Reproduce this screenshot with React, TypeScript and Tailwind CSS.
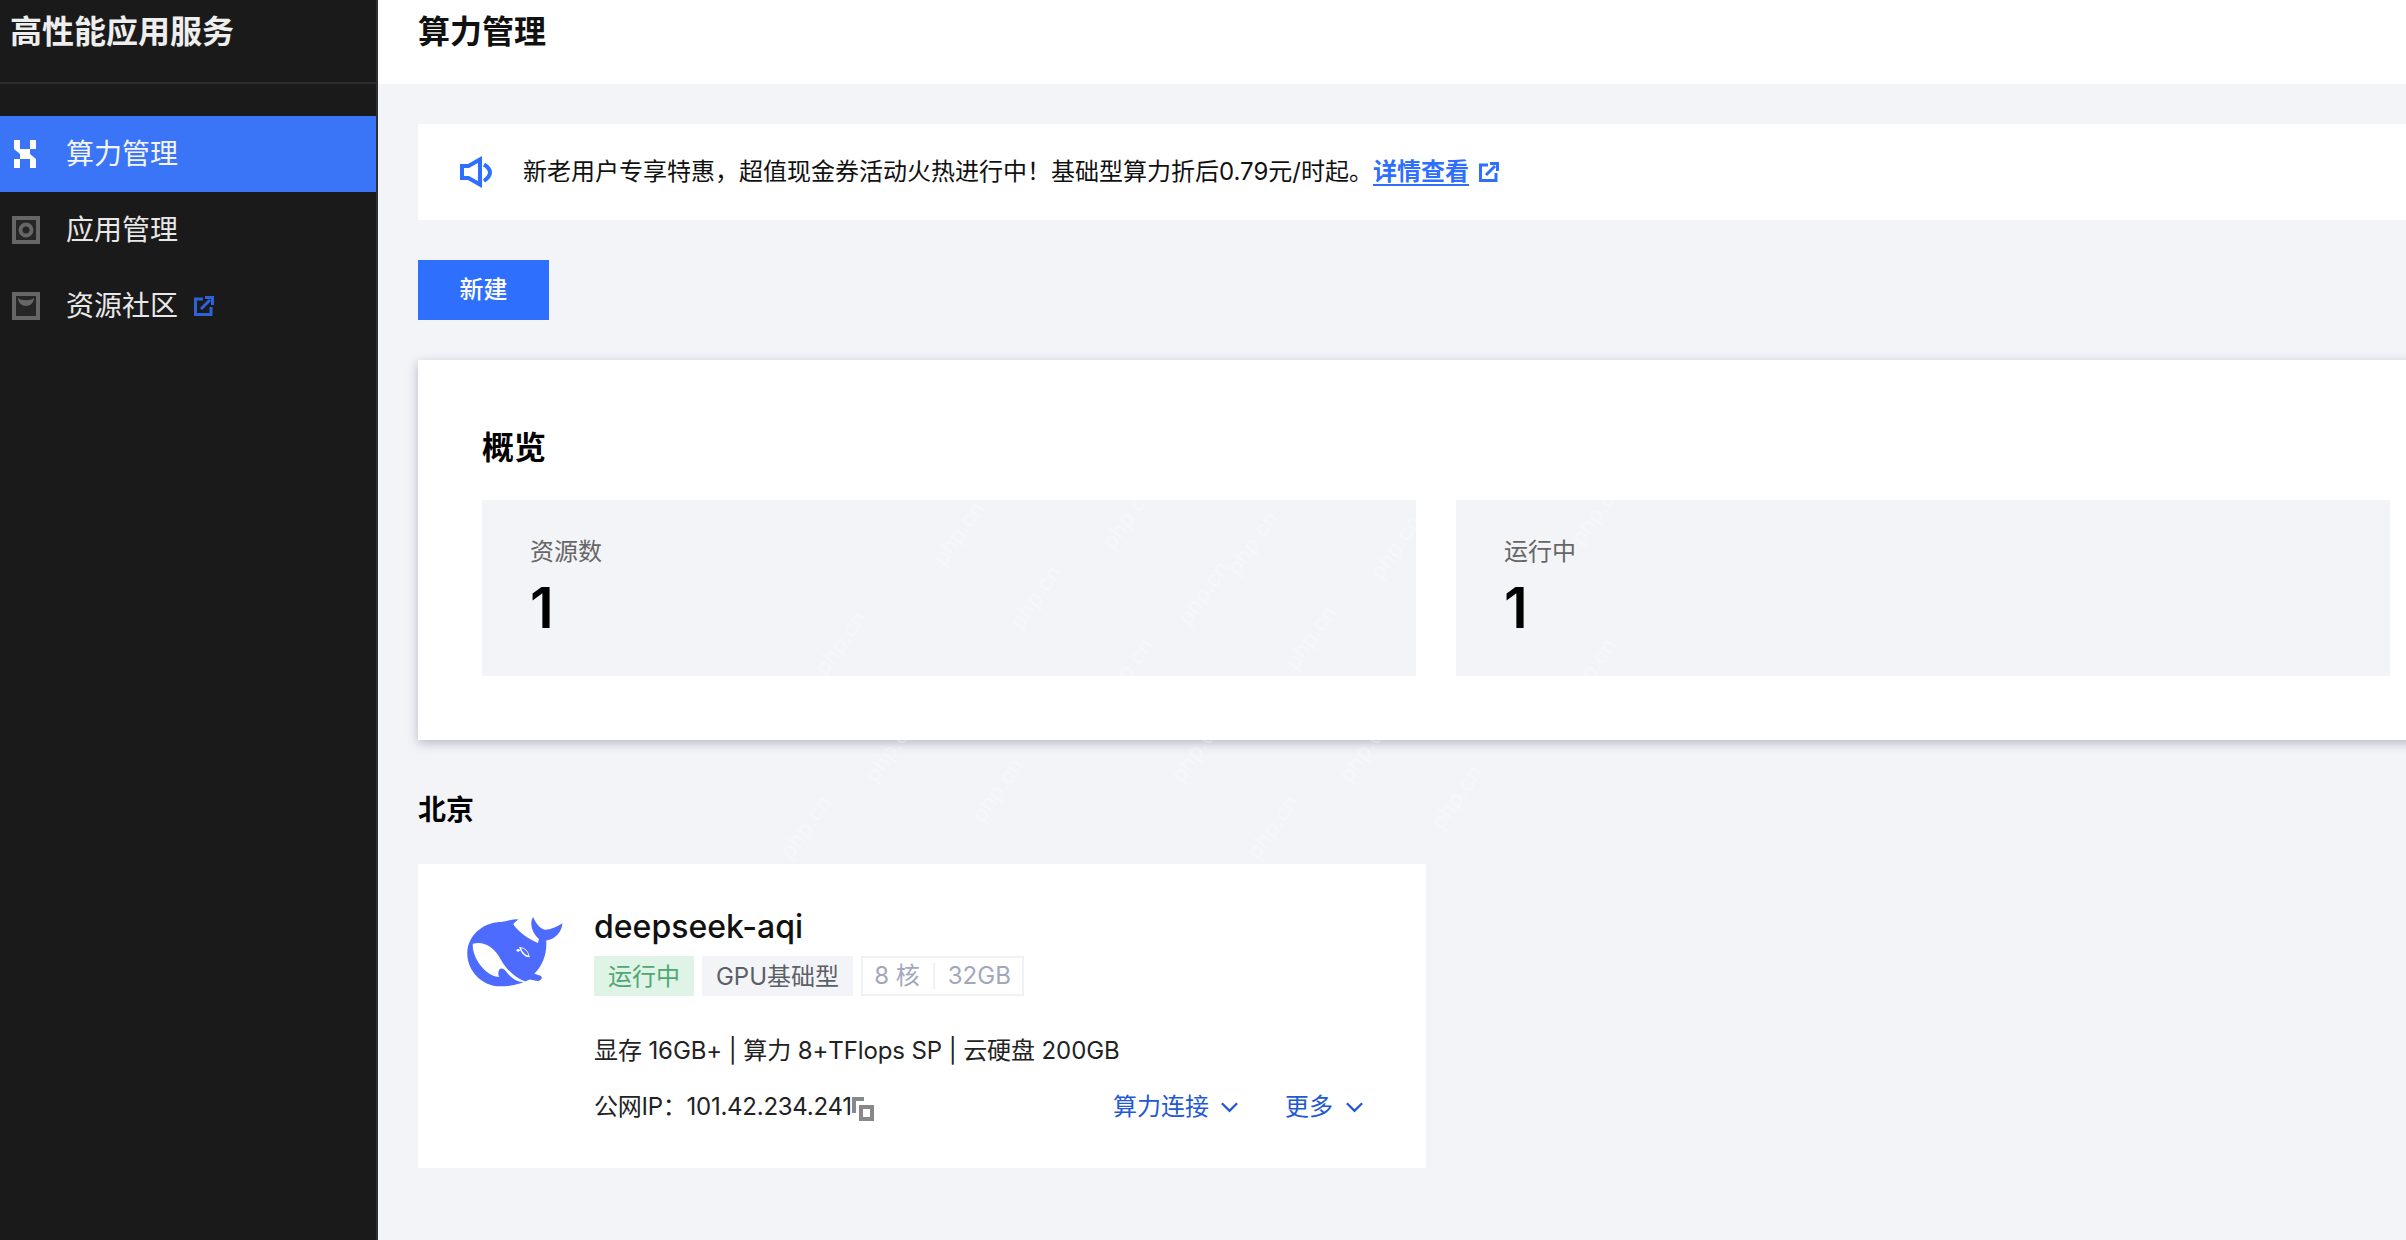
const font = "font-['Inter','Noto_Sans_CJK_SC',sans-serif]"

const marks = [
  [958, 533], [1127, 517], [1252, 543], [1395, 547], [1035, 597], [1203, 593], [840, 643],
  [1310, 637], [1127, 670], [1596, 513], [1590, 670], [890, 750], [1196, 750], [1364, 750],
  [997, 790], [1456, 797], [805, 827], [1272, 827],
]

function ExternalIcon({ className }: { className: string }) {
  return (
    <svg viewBox="0 0 20 20" className={className} fill="none" stroke="currentColor" strokeWidth="3">
      <path d="M9 3H1.5V18.5H17V11" />
      <path d="M7 13L16 4" />
      <path d="M11 1.5H18.5V9" />
    </svg>
  )
}

function Chevron() {
  return (
    <svg viewBox="0 0 20 12" className="w-[19px] h-[12px]" fill="none" stroke="currentColor" strokeWidth="2.4">
      <path d="M2 2L10 10L18 2" />
    </svg>
  )
}

function Whale() {
  return (
    <svg viewBox="30 30 295 218" className="w-[98px] h-[72px]">
      <path
        fillRule="evenodd"
        fill="#4d6bfe"
        d="M187 40C165 37 150 50 128 48C78 52 34 90 33 142C32 197 80 245 135 243C168 243 200 233 222 222L245 227C258 226 263 216 255 211L236 205C262 180 275 142 272 104C298 102 320 78 321 52C305 63 286 71 268 72C250 66 240 50 232 33C222 50 226 78 250 100L247 112C215 98 190 80 172 55C176 50 182 46 187 40Z"
      />
      <path
        fill="#ffffff"
        d="M50 114C82 104 116 124 136 164C150 190 178 218 210 229C190 233 168 222 150 197C143 189 137 187 130 192C126 200 126 208 130 215C100 213 72 186 58 155C52 140 48 125 50 114Z"
      />
      <ellipse cx="187" cy="134" rx="5" ry="4" fill="#ffffff" />
      <path d="M190 124C205 124 220 136 222 155C210 156 196 146 190 124Z" fill="#ffffff" />
      <path d="M196 128C208 130 216 138 218 150C208 148 200 140 196 128Z" fill="#4d6bfe" />
    </svg>
  )
}

function Sidebar() {
  return (
    <aside className="w-[378px] shrink-0 bg-[#1a1a1a] border-r-2 border-[#303030] text-[#e8e8e8]">
      <div className="h-[84px] border-b-2 border-[#2c2c2c] pl-[10px] pt-[12px] text-[32px] leading-[40px] font-semibold text-[#eeeeee]">
        高性能应用服务
      </div>
      <nav className="pt-[32px] text-[28px]">
        <div className="h-[76px] bg-[#3a75f7] flex items-center pl-[14px] text-[#f4f4f4]">
          <svg viewBox="0 0 22 28" className="w-[22px] h-[28px]" fill="#ffffff">
            <path d="M0 0H6V9H8L16 9V0H22V9H16L16 14L22 19V28H16V19H6V28H0V19H6V14L0 9Z" />
          </svg>
          <span className="ml-[30px]">算力管理</span>
        </div>
        <div className="h-[76px] flex items-center pl-[12px]">
          <svg viewBox="0 0 28 28" className="w-[28px] h-[28px]">
            <rect x="2" y="2" width="24" height="24" fill="#262626" stroke="#666666" strokeWidth="4" />
            <circle cx="14" cy="14" r="5.5" fill="#262626" stroke="#666666" strokeWidth="4" />
          </svg>
          <span className="ml-[26px]">应用管理</span>
        </div>
        <div className="h-[76px] flex items-center pl-[12px]">
          <svg viewBox="0 0 28 28" className="w-[28px] h-[28px]">
            <rect x="2" y="2" width="24" height="24" fill="#262626" stroke="#666666" strokeWidth="4" />
            <path d="M6 6C9 9 19 9 22 6C22 11 18 14 14 14C10 14 6 11 6 6Z" fill="#666666" />
          </svg>
          <span className="ml-[26px]">资源社区</span>
          <ExternalIcon className="ml-[16px] w-[20px] h-[20px] text-[#2d62d8]" />
        </div>
      </nav>
    </aside>
  )
}

function Stat({ label, value }: { label: string; value: string }) {
  return (
    <div className="w-[934px] h-[176px] bg-[#f3f4f8] pl-[48px] pt-[36px]">
      <div className="text-[24px] leading-[32px] text-[#666666]">{label}</div>
      <div className="mt-[6px] text-[56px] leading-[68px] font-semibold text-black">{value}</div>
    </div>
  )
}

export default function App() {
  return (
    <div className={`${font} relative flex w-[2406px] h-[1240px] overflow-hidden bg-[#f3f4f8]`}>
      <Sidebar />
      <main className="flex-1 min-w-0">
        <header className="h-[84px] bg-white pl-[40px] pt-[12px] text-[32px] leading-[40px] font-semibold text-[#111111]">
          算力管理
        </header>
        <div className="pl-[40px] pt-[40px]">
          <div className="h-[96px] bg-white flex items-center pl-[42px] text-[24px] text-[#111111]">
            <svg viewBox="0 0 32 32" className="w-[32px] h-[32px] text-[#2f6ffd]" fill="none" stroke="currentColor" strokeWidth="4">
              <path d="M2 10H8.5L20 3.5V28.5L8.5 22H2Z" />
              <path d="M24 8.5C28 11 30 14 30 16.5C30 19 28 22 24 25" />
            </svg>
            <span className="ml-[31px]">新老用户专享特惠，超值现金券活动火热进行中！基础型算力折后0.79元/时起。</span>
            <span className="font-semibold text-[#2f6ffd] underline underline-offset-4">详情查看</span>
            <ExternalIcon className="ml-[10px] w-[20px] h-[20px] text-[#2f6ffd]" />
          </div>

          <button className="mt-[40px] block w-[131px] h-[60px] bg-[#2f6ffd] text-white text-[24px] font-medium">新建</button>

          <section className="mt-[40px] w-[2100px] h-[380px] bg-white pl-[64px] pt-[64px] shadow-[0_3px_10px_rgba(70,75,95,0.35)]">
            <h2 className="text-[32px] leading-[48px] font-bold text-black">概览</h2>
            <div className="mt-[28px] flex gap-[40px]">
              <Stat label="资源数" value="1" />
              <Stat label="运行中" value="1" />
            </div>
          </section>

          <h3 className="mt-[50px] text-[28px] leading-[40px] font-bold text-black">北京</h3>

          <article className="mt-[34px] w-[1008px] h-[304px] bg-white flex pl-[48px] pt-[52px]">
            <Whale />
            <div className="ml-[30px] w-[770px] -mt-[9px]">
              <div className="text-[32px] leading-[40px] font-medium text-[#111111]">deepseek-aqi</div>
              <div className="mt-[9px] flex gap-[8px] text-[24px] leading-[42px]">
                <span className="w-[100px] h-[40px] text-center bg-[#dff3e6] text-[#4fa873]">运行中</span>
                <span className="w-[151px] h-[40px] text-center bg-[#f3f4f8] text-[#5c5f66]">GPU基础型</span>
                <span className="w-[163px] h-[40px] flex items-center justify-center border-2 border-[#f0f1f5] text-[#a2a8bc]">
                  8 核<i className="mx-[13px] w-[2px] h-[26px] bg-[#f0f1f5]" />32GB
                </span>
              </div>
              <div className="mt-[39px] text-[24px] leading-[32px] tracking-[-0.1px] text-[#222222]">显存 16GB+ | 算力 8+TFlops SP | 云硬盘 200GB</div>
              <div className="mt-[24px] flex items-center text-[24px] leading-[32px] text-[#222222]">
                <span className="tracking-[-0.25px]">公网IP：101.42.234.241</span>
                <svg viewBox="0 0 22 24" className="w-[22px] h-[24px] mt-[4px]" fill="none" stroke="#888888" strokeWidth="4">
                  <path d="M2 16V2H12" />
                  <rect x="9" y="10" width="11" height="12" />
                </svg>
                <div className="ml-auto flex items-center gap-[46px] text-[#2358d3]">
                  <span className="flex items-center gap-[11px]">算力连接<Chevron /></span>
                  <span className="flex items-center gap-[12px]">更多<Chevron /></span>
                </div>
              </div>
            </div>
          </article>
        </div>
      </main>
      {marks.map(([x, y]) => (
        <span
          key={`${x}-${y}`}
          className="absolute pointer-events-none text-[22px] leading-none text-white/30 -rotate-[55deg] -translate-x-1/2 -translate-y-1/2"
          style={{ left: x, top: y }}
        >
          php.cn
        </span>
      ))}
    </div>
  )
}
